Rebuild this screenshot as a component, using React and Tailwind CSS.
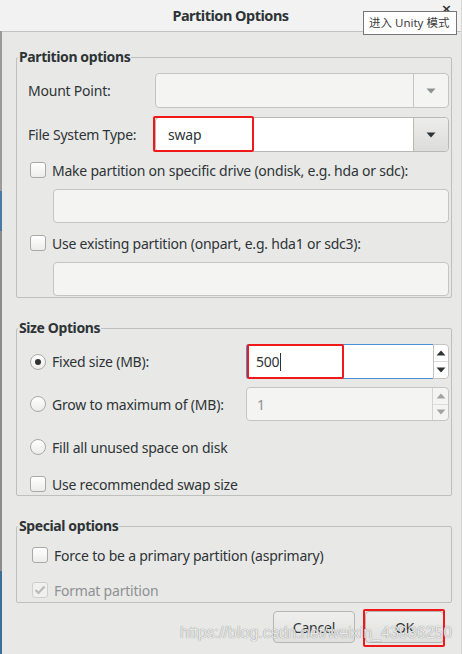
import React from "react";

const Arrow = ({ dir = "down", color = "#2e3436" }) => (
  <svg width="10" height="6" viewBox="0 0 10 6" className="block">
    {dir === "down" ? (
      <path d="M0.5 0.5 L9.5 0.5 L5 5.5 Z" fill={color} />
    ) : (
      <path d="M0.5 5.5 L9.5 5.5 L5 0.5 Z" fill={color} />
    )}
  </svg>
);

const Check = ({ checked = false, disabled = false, className = "" }) => (
  <div
    className={`w-[16px] h-[16px] rounded-[3px] border shrink-0 flex items-center justify-center ${
      disabled
        ? "border-[#cfcfcd] bg-[#f0f0ef]"
        : "border-[#a9aaa8] bg-gradient-to-b from-[#ffffff] to-[#ececeb]"
    } ${className}`}
  >
    {checked && (
      <svg width="12" height="10" viewBox="0 0 12 10">
        <path
          d="M1.5 5 L4.5 8 L10.5 1.5"
          fill="none"
          stroke={disabled ? "#b9bbb9" : "#2e3436"}
          strokeWidth="2.2"
        />
      </svg>
    )}
  </div>
);

const Radio = ({ checked = false }) => (
  <div className="w-[16px] h-[16px] rounded-full border border-[#a9aaa8] bg-gradient-to-b from-[#ffffff] to-[#ececeb] shrink-0 flex items-center justify-center">
    {checked && <div className="w-[6px] h-[6px] rounded-full bg-[#2e3436]" />}
  </div>
);

const Entry = ({ className = "" }) => (
  <div
    className={`h-[34px] rounded-[4px] border border-[#c4c5c2] bg-[#f4f4f3] ${className}`}
  />
);

const Legend = ({ children }) => (
  <legend className="ml-[-10px] px-[1px] font-bold text-[14px] leading-[20px] tracking-[-0.4px]">
    {children}
  </legend>
);

export default function App() {
  return (
    <div className="relative flex w-[462px] h-[654px] overflow-hidden bg-[#e8e8e7] font-['Noto_Sans',sans-serif] text-[14px] tracking-[-0.22px] text-[#2e3436]">
      {/* left desktop strip */}
      <div className="w-[2px] flex flex-col shrink-0 bg-[#b5b5b5]">
        <div className="h-[31px] bg-[#f2f2f2]" />
        <div className="h-[160px] bg-[#9a9a9a]" />
        <div className="h-[40px] bg-[#4c78a8]" />
        <div className="h-[340px] bg-[#8c8c8c]" />
        <div className="flex-1 bg-[#3a7096]" />
      </div>

      {/* window */}
      <div className="flex-1 flex flex-col border-r border-[#d6d6d4]">
        {/* title bar */}
        <div className="h-[32px] shrink-0 bg-[#f2f2f2] border-b border-[#c2c2c0] flex items-center justify-center pr-[2px]">
          <span className="font-bold text-[14.5px] tracking-[-0.5px] text-[#2e3436] leading-none">
            Partition Options
          </span>
        </div>

        <div className="flex flex-col px-[14px] pr-[9px]">
          {/* Partition options group */}
          <fieldset className="mt-[15px] border border-[#bfc0bd] rounded-[2px] pl-[11px] pr-[2px] pb-[1px]">
            <Legend>Partition options</Legend>
            <div className="flex items-center mt-[6px] h-[35px]">
              <div className="w-[127px] shrink-0">Mount Point:</div>
              <div className="flex-1 h-[35px] flex rounded-[4px] border border-[#c4c5c2] bg-[#f4f4f3]">
                <div className="flex-1" />
                <div className="w-[35px] border-l border-[#c4c5c2] flex items-center justify-center">
                  <Arrow color="#8e9192" />
                </div>
              </div>
            </div>
            <div className="flex items-center mt-[9px] h-[35px]">
              <div className="w-[127px] shrink-0">File System Type:</div>
              <div className="relative flex-1 h-[35px] flex rounded-[4px] border border-[#b8b9b6] bg-white">
                <div className="flex-1 flex items-center pl-[12px]">swap</div>
                <div className="w-[35px] border-l border-[#b8b9b6] rounded-r-[4px] bg-gradient-to-b from-[#ededec] to-[#dcdcdb] flex items-center justify-center">
                  <Arrow />
                </div>
                <div className="absolute left-[-3px] top-[-2px] w-[101px] h-[36px] border-2 border-[#f01818] rounded-[2px]" />
              </div>
            </div>
            <div className="flex items-center mt-[8px] h-[20px]">
              <Check className="ml-[2px]" />
              <span className="ml-[6px]">
                Make partition on specific drive (ondisk, e.g. hda or sdc):
              </span>
            </div>
            <Entry className="mt-[9px] ml-[25px]" />
            <div className="flex items-center mt-[10px] h-[20px]">
              <Check className="ml-[2px]" />
              <span className="ml-[6px]">
                Use existing partition (onpart, e.g. hda1 or sdc3):
              </span>
            </div>
            <Entry className="mt-[9px] ml-[25px]" />
          </fieldset>

          {/* Size options */}
          <fieldset className="mt-[20px] border border-[#bfc0bd] rounded-[2px] pl-[11px] pr-[2px] pb-[1px]">
            <Legend>Size Options</Legend>
            <div className="flex items-center mt-[6px] h-[35px]">
              <div className="w-[218px] shrink-0 flex items-center">
                <div className="ml-[2px]">
                  <Radio checked />
                </div>
                <span className="ml-[6px]">Fixed size (MB):</span>
              </div>
              <div className="relative flex-1 h-[35px] flex">
                <div className="flex-1 flex items-center pl-[9px] bg-white border border-[#4a90d9] rounded-l-[3px] border-r-0">
                  <span>500</span>
                  <span className="w-[1px] h-[18px] bg-[#2e3436] ml-[1px]" />
                </div>
                <div className="w-[16px] flex flex-col bg-white border border-[#c4c5c2] rounded-r-[4px]">
                  <div className="flex-1 flex items-center justify-center border-b border-[#dcdcdb]">
                    <Arrow dir="up" />
                  </div>
                  <div className="flex-1 flex items-center justify-center">
                    <Arrow />
                  </div>
                </div>
                <div className="absolute left-[1px] top-[0px] w-[97px] h-[35px] border-2 border-[#f01818] rounded-[2px]" />
              </div>
            </div>
            <div className="flex items-center mt-[8px] h-[34px]">
              <div className="w-[218px] shrink-0 flex items-center">
                <div className="ml-[2px]">
                  <Radio />
                </div>
                <span className="ml-[6px]">Grow to maximum of (MB):</span>
              </div>
              <div className="flex-1 h-[34px] flex rounded-[4px] border border-[#c4c5c2] bg-[#f4f4f3]">
                <div className="flex-1 flex items-center pl-[10px] text-[#8e9192]">1</div>
                <div className="w-[16px] flex flex-col border-l border-[#d4d4d2]">
                  <div className="flex-1 flex items-center justify-center border-b border-[#dcdcdb]">
                    <Arrow dir="up" color="#a3a5a5" />
                  </div>
                  <div className="flex-1 flex items-center justify-center">
                    <Arrow color="#a3a5a5" />
                  </div>
                </div>
              </div>
            </div>
            <div className="flex items-center mt-[16px] h-[20px]">
              <div className="ml-[2px]">
                <Radio />
              </div>
              <span className="ml-[6px]">Fill all unused space on disk</span>
            </div>
            <div className="flex items-center mt-[17px] h-[20px]">
              <Check className="ml-[2px]" />
              <span className="ml-[6px]">Use recommended swap size</span>
            </div>
          </fieldset>

          {/* Special options */}
          <fieldset className="mt-[20px] border border-[#bfc0bd] rounded-[2px] pl-[11px] pr-[2px] pb-[2px]">
            <Legend>Special options</Legend>
            <div className="flex items-center mt-[9px] h-[20px]">
              <Check className="ml-[4px]" />
              <span className="ml-[6px]">Force to be a primary partition (asprimary)</span>
            </div>
            <div className="flex items-center mt-[15px] h-[20px]">
              <Check checked disabled className="ml-[4px]" />
              <span className="ml-[6px] text-[#8e9192]">Format partition</span>
            </div>
          </fieldset>

          {/* buttons */}
          <div className="flex justify-end gap-[10px] mt-[8px] pr-[8px]">
            <button className="w-[82px] h-[32px] rounded-[4px] border border-[#b6b7b4] bg-gradient-to-b from-[#efefee] to-[#e0e0df] text-[#2e3436] text-[14px]">
              Cancel
            </button>
            <div className="relative">
              <button className="w-[79px] h-[32px] rounded-[4px] border border-[#b6b7b4] bg-gradient-to-b from-[#efefee] to-[#e0e0df] text-[#2e3436] text-[14px]">
                OK
              </button>
              <div className="absolute left-[-2px] top-[-2px] w-[82px] h-[38px] border-2 border-[#f01818] rounded-[2px]" />
            </div>
          </div>
        </div>
      </div>

      {/* close glyph partly under tooltip */}
      <div className="absolute left-[441px] top-[2px] text-[13px] leading-none text-[#2e3436] font-bold font-['DejaVu_Sans',sans-serif]">
        ×
      </div>

      {/* tooltip */}
      <div className="absolute left-[363px] top-[11px] w-[94px] h-[24px] bg-white border border-[#767676] flex items-center pl-[5px] text-[11.5px] tracking-normal text-[#3c3c3c] font-['Noto_Sans','Noto_Sans_CJK_SC',sans-serif] whitespace-nowrap">
        进入 Unity 模式
      </div>

      {/* watermark */}
      <div className="absolute left-[180px] top-[623px] text-[16px] leading-[20px] tracking-normal text-white/85 font-['Liberation_Sans',sans-serif] [text-shadow:0_0_1px_rgba(0,0,0,0.6)] whitespace-nowrap pointer-events-none">
        https://blog.csdn.net/weixin_43936250
      </div>
    </div>
  );
}
